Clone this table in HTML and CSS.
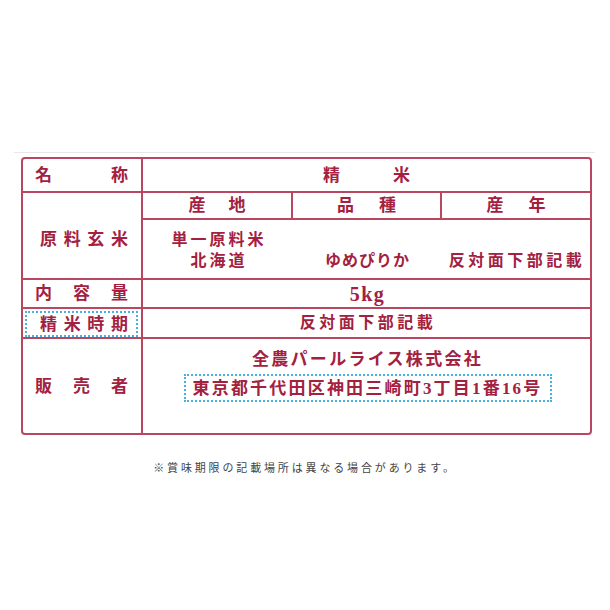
FILE: index.html
```html
<!DOCTYPE html>
<html lang="ja">
<head>
<meta charset="utf-8">
<title>精米 表示</title>
<link rel="stylesheet" href="styles.css">
</head>
<body>
<div class="page">
  <div class="rule"></div>
  <div class="sheet">
    <div class="row r1">
      <div class="label"><span>名</span><span>称</span></div>
      <div class="value head"><span>精</span><span>米</span></div>
    </div>
    <div class="row r2">
      <div class="label lab-origin"><span>原</span><span>料</span><span>玄</span><span>米</span></div>
      <div class="origin">
        <div class="sub-head">
          <div class="sh sh1"><span>産</span><span>地</span></div>
          <div class="sh sh2"><span>品</span><span>種</span></div>
          <div class="sh sh3"><span>産</span><span>年</span></div>
        </div>
        <div class="sub-vals">
          <div class="sv sv1"><span>単一原料米</span><span>北海道</span></div>
          <div class="sv sv2">ゆめぴりか</div>
          <div class="sv sv3">反対面下部記載</div>
        </div>
      </div>
    </div>
    <div class="row r3">
      <div class="label"><span>内</span><span>容</span><span>量</span></div>
      <div class="value kg">5kg</div>
    </div>
    <div class="row r4">
      <div class="label lab-date"><div class="dotted-lab"><span>精</span><span>米</span><span>時</span><span>期</span></div></div>
      <div class="value spaced">反対面下部記載</div>
    </div>
    <div class="row r5">
      <div class="label"><span>販</span><span>売</span><span>者</span></div>
      <div class="seller">
        <div class="company">全農パールライス株式会社</div>
        <div class="address">東京都千代田区神田三崎町3丁目1番16号</div>
      </div>
    </div>
  </div>
  <p class="note">※賞味期限の記載場所は異なる場合があります。</p>
</div>
</body>
</html>
```

FILE: styles.css
```css
:root {
  --line: #b9475f;
  --ink: #a3213f;
  --dot: #45b2e0;
}

* {
  box-sizing: border-box;
}

body {
  margin: 0;
  background: #ffffff;
}

.page {
  padding-top: 152px;
  font-family: "Liberation Serif", "Noto Sans CJK JP", sans-serif;
  color: var(--ink);
}

.rule {
  height: 1px;
  background: #e8e8e8;
  margin: 0 15px 0 14px;
}

.sheet {
  margin: 4px 18px 0 21px;
  border: 2px solid var(--line);
  border-radius: 4px;
}

.row {
  display: grid;
  grid-template-columns: 120px 1fr;
  border-bottom: 2px solid var(--line);
}

.row:last-child {
  border-bottom: none;
}

.r1 { height: 34px; }
.r2 { height: 87px; }
.r3 { height: 29px; }
.r4 { height: 30px; }
.r5 { height: 94px; }

.label {
  border-right: 2px solid var(--line);
  display: flex;
  justify-content: space-between;
  align-items: center;
  padding: 0 13px 0 12px;
  font-size: 17px;
  font-weight: 700;
  line-height: 1;
}

.lab-origin {
  padding: 8px 13px 0 17px;
}

.lab-date {
  padding: 2px 3px 0 2px;
  align-items: stretch;
}

.dotted-lab {
  flex: 1;
  border: 2px dotted var(--dot);
  display: flex;
  justify-content: space-between;
  align-items: center;
  padding: 0 8px 0 13px;
}

.value {
  display: flex;
  justify-content: center;
  align-items: center;
  font-size: 16px;
  font-weight: 700;
  line-height: 1;
}

.head {
  gap: 53px;
  font-size: 17px;
}

.kg {
  font-size: 20px;
  letter-spacing: 1.5px;
  padding-left: 2px;
}

.spaced {
  letter-spacing: 3.5px;
  padding-left: 3px;
}

.origin {
  display: flex;
  flex-direction: column;
}

.sub-head {
  display: grid;
  grid-template-columns: 150px 149px 1fr;
  height: 27px;
  border-bottom: 2px solid var(--line);
}

.sh {
  display: flex;
  justify-content: center;
  align-items: center;
  gap: 23px;
  font-size: 17px;
  font-weight: 700;
  line-height: 1;
}

.sh1, .sh2 {
  border-right: 2px solid var(--line);
}

.sh2, .sh3 {
  gap: 25px;
}

.sub-vals {
  flex: 1;
  display: grid;
  grid-template-columns: 150px 149px 1fr;
  align-items: end;
  padding-bottom: 7px;
  font-size: 16px;
  font-weight: 700;
  line-height: 21px;
}

.sv {
  text-align: center;
}

.sv1 {
  display: flex;
  flex-direction: column;
  align-items: center;
  letter-spacing: 3px;
  padding-left: 2px;
}

.sv2 {
  letter-spacing: 1px;
}

.sv3 {
  letter-spacing: 3.5px;
  padding-left: 2px;
}

.seller {
  display: flex;
  flex-direction: column;
  align-items: center;
  padding-top: 10px;
  font-weight: 700;
}

.company {
  font-size: 17px;
  line-height: 21px;
  letter-spacing: 2.3px;
  padding-left: 2px;
}

.address {
  margin-top: 4px;
  border: 2px dotted var(--dot);
  height: 28px;
  width: 368px;
  margin-left: 2px;
  display: flex;
  align-items: center;
  justify-content: center;
  font-size: 17px;
  letter-spacing: 2.2px;
  line-height: 1;
}

.note {
  margin: 24px 0 0;
  text-align: center;
  font-family: "Noto Sans CJK JP", sans-serif;
  font-size: 11px;
  line-height: 16px;
  letter-spacing: 2.85px;
  color: #444444;
}
```
